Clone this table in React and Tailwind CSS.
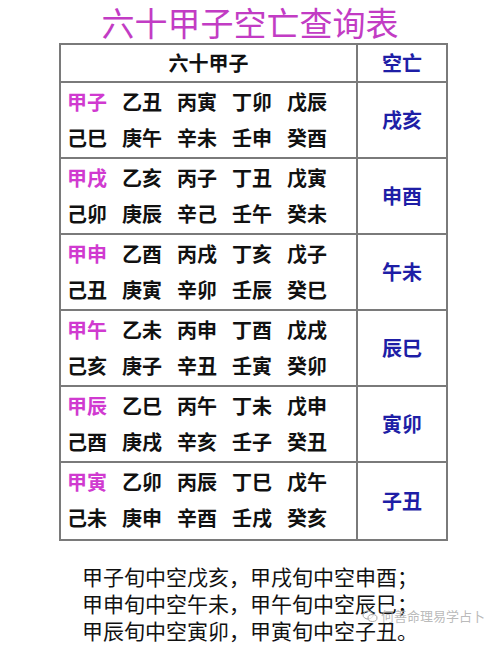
const groups = [
  { head: "甲子", rest1: ["乙丑", "丙寅", "丁卯", "戊辰"], line2: ["己巳", "庚午", "辛未", "壬申", "癸酉"], kong: "戌亥" },
  { head: "甲戌", rest1: ["乙亥", "丙子", "丁丑", "戊寅"], line2: ["己卯", "庚辰", "辛己", "壬午", "癸未"], kong: "申酉" },
  { head: "甲申", rest1: ["乙酉", "丙戌", "丁亥", "戊子"], line2: ["己丑", "庚寅", "辛卯", "壬辰", "癸巳"], kong: "午未" },
  { head: "甲午", rest1: ["乙未", "丙申", "丁酉", "戊戌"], line2: ["己亥", "庚子", "辛丑", "壬寅", "癸卯"], kong: "辰巳" },
  { head: "甲辰", rest1: ["乙巳", "丙午", "丁未", "戊申"], line2: ["己酉", "庚戌", "辛亥", "壬子", "癸丑"], kong: "寅卯" },
  { head: "甲寅", rest1: ["乙卯", "丙辰", "丁巳", "戊午"], line2: ["己未", "庚申", "辛酉", "壬戌", "癸亥"], kong: "子丑" },
];

const font = { fontFamily: '"Noto Sans CJK SC", "Noto Sans", sans-serif' };

function Row({ g, last }) {
  return (
    <div className={"flex h-[76px] " + (last ? "" : "border-b-2 border-[#7a7a7a]")}>
      <div className="w-[297px] border-r-2 border-[#7a7a7a] pl-[6px] pt-[1px] font-bold text-[20px] leading-[36px] text-[#111]">
        <div className="flex gap-[15px]">
          <span className="text-[#d03ad0]">{g.head}</span>
          {g.rest1.map((p) => (
            <span key={p}>{p}</span>
          ))}
        </div>
        <div className="flex gap-[15px]">
          {g.line2.map((p) => (
            <span key={p}>{p}</span>
          ))}
        </div>
      </div>
      <div className="flex-1 flex items-center justify-center font-bold text-[20px] text-[#1e1ea6]">
        {g.kong}
      </div>
    </div>
  );
}

export default function App() {
  return (
    <div className="relative w-[500px] h-[647px] bg-white overflow-hidden" style={font}>
      {/* Title */}
      <div className="pt-[1px] text-center text-[33px] leading-[42px] text-[#c23cc4]">六十甲子空亡查询表</div>

      {/* Table */}
      <div className="ml-[59px] w-[389px] border-2 border-[#7a7a7a]">
        <div className="flex h-[38px] border-b-2 border-[#7a7a7a] font-bold text-[20px]">
          <div className="w-[297px] border-r-2 border-[#7a7a7a] flex items-center justify-center text-[#111]">六十甲子</div>
          <div className="flex-1 flex items-center justify-center text-[#1e1ea6]">空亡</div>
        </div>
        {groups.map((g, i) => (
          <Row key={g.head} g={g} last={i === groups.length - 1} />
        ))}
      </div>

      {/* Footer */}
      <div className="mt-[22px] pl-[82px] text-[21px] leading-[27px] text-[#111]">
        <div>甲子旬中空戊亥，甲戌旬中空申酉；</div>
        <div>甲申旬中空午未，甲午旬中空辰巳；</div>
        <div>甲辰旬中空寅卯，甲寅旬中空子丑。</div>
      </div>

      {/* Watermark */}
      <div className="absolute left-[362px] top-[608px] flex items-center gap-[3px] text-[13px] leading-[16px] text-[#a8a8a8]/80">
        <svg width="16" height="13" viewBox="0 0 16 13" fill="none" stroke="#a8a8a8" strokeWidth="1">
          <ellipse cx="6" cy="5" rx="5" ry="4" />
          <ellipse cx="10.5" cy="8" rx="4.5" ry="3.5" fill="white" fillOpacity="0.6" />
        </svg>
        <span>何善命理易学占卜</span>
      </div>
    </div>
  );
}
